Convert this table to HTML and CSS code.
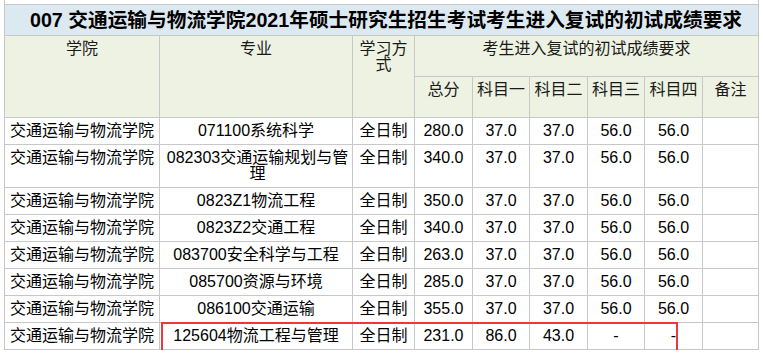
FILE: index.html
```html
<!DOCTYPE html>
<html lang="zh">
<head>
<meta charset="utf-8">
<link rel="stylesheet" href="styles.css">
</head>
<body>
<div class="wrap">
<div class="above"></div>
<table class="grid">
<colgroup>
<col class="c1"><col class="c2"><col class="c3"><col class="c4"><col class="c5"><col class="c6"><col class="c7"><col class="c8"><col class="c9">
</colgroup>
<thead>
<tr class="title"><th colspan="9">007 交通运输与物流学院2021年硕士研究生招生考试考生进入复试的初试成绩要求</th></tr>
<tr class="h1"><th rowspan="2">学院</th><th rowspan="2">专业</th><th rowspan="2">学习方式</th><th colspan="6" class="sub">考生进入复试的初试成绩要求</th></tr>
<tr class="h2"><th>总分</th><th>科目一</th><th>科目二</th><th>科目三</th><th>科目四</th><th>备注</th></tr>
</thead>
<tbody>
<tr><td>交通运输与物流学院</td><td>071100系统科学</td><td>全日制</td><td>280.0</td><td>37.0</td><td>37.0</td><td>56.0</td><td>56.0</td><td></td></tr>
<tr class="tall"><td>交通运输与物流学院</td><td class="wrapcell">082303交通运输规划与管理</td><td>全日制</td><td>340.0</td><td>37.0</td><td>37.0</td><td>56.0</td><td>56.0</td><td></td></tr>
<tr><td>交通运输与物流学院</td><td>0823Z1物流工程</td><td>全日制</td><td>350.0</td><td>37.0</td><td>37.0</td><td>56.0</td><td>56.0</td><td></td></tr>
<tr><td>交通运输与物流学院</td><td>0823Z2交通工程</td><td>全日制</td><td>340.0</td><td>37.0</td><td>37.0</td><td>56.0</td><td>56.0</td><td></td></tr>
<tr><td>交通运输与物流学院</td><td>083700安全科学与工程</td><td>全日制</td><td>263.0</td><td>37.0</td><td>37.0</td><td>56.0</td><td>56.0</td><td></td></tr>
<tr><td>交通运输与物流学院</td><td>085700资源与环境</td><td>全日制</td><td>285.0</td><td>37.0</td><td>37.0</td><td>56.0</td><td>56.0</td><td></td></tr>
<tr><td>交通运输与物流学院</td><td>086100交通运输</td><td>全日制</td><td>355.0</td><td>37.0</td><td>37.0</td><td>56.0</td><td>56.0</td><td></td></tr>
<tr><td>交通运输与物流学院</td><td>125604物流工程与管理</td><td>全日制</td><td>231.0</td><td>86.0</td><td>43.0</td><td>-</td><td class="dashr">-</td><td></td></tr>
</tbody>
</table>
<div class="highlight"></div>
</div>
</body>
</html>
```

FILE: styles.css
```css
html, body {
  margin: 0;
  padding: 0;
  background: #ffffff;
}
.wrap {
  position: relative;
  padding: 0 0 0 4px;
}
.above {
  box-sizing: border-box;
  width: 755px;
  height: 4px;
  border-left: 1px solid #c8c8c8;
  border-right: 1px solid #c8c8c8;
}
.grid {
  border-collapse: collapse;
  table-layout: fixed;
  width: 755px;
  font-family: "Liberation Sans", "Noto Sans CJK SC", sans-serif;
  font-size: 16px;
  line-height: 16px;
  color: #000;
}
.c1 { width: 155px; }
.c2 { width: 193px; }
.c3 { width: 62px; }
.c4 { width: 58px; }
.c5 { width: 57px; }
.c6 { width: 58px; }
.c7 { width: 57px; }
.c8 { width: 58px; }
.c9 { width: 56px; }
.grid th, .grid td {
  border: 1px solid #c8c8c8;
  padding: 5px 4px;
  text-align: center;
  vertical-align: top;
  font-weight: normal;
  overflow: hidden;
}
.grid td.wrapcell {
  padding-left: 6px;
  padding-right: 3px;
  word-break: break-all;
}
.grid .title th {
  background: #dce9f1;
  font-weight: bold;
  font-size: 19.7px;
  line-height: 20px;
  height: 20px;
  padding: 5px 0 5px 9px;
  vertical-align: middle;
  white-space: nowrap;
  color: #000;
}
.grid .h1 th, .grid .h2 th {
  background: #edf2e2;
  color: #1a1a1a;
}
.grid .h1 th.sub { height: 30px; }
.grid .h2 th { height: 30px; }
.grid tbody td { height: 16px; }
.grid tbody .tall td { height: 32px; }
.grid td.dashr { text-align: right; padding-right: 26px; }
.highlight {
  position: absolute;
  left: 161px;
  top: 322px;
  width: 513px;
  height: 27px;
  border: 2px solid #e8393d;
  pointer-events: none;
}
```
